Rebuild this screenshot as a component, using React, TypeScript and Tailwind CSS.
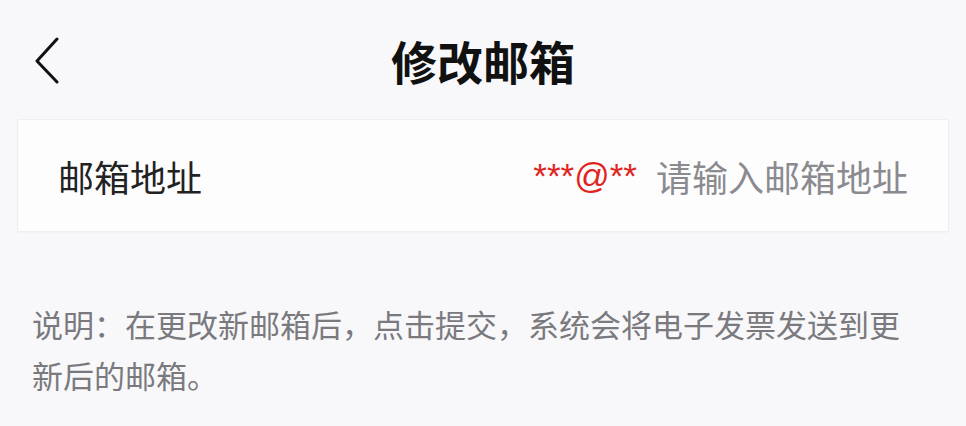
const cjk = "font-['Noto_Sans_CJK_SC','Noto_Sans',sans-serif]";

export default function App() {
  return (
    <div className={`w-[966px] h-[426px] overflow-hidden bg-[#f8f8fa] ${cjk}`}>
      <header className="relative h-[119px] flex items-center justify-center">
        <button className="absolute left-[33px] top-[35px] w-[28px] h-[50px] flex items-center justify-center">
          <svg width="26" height="48" viewBox="0 0 26 48" fill="none">
            <path d="M23 3 L3 25 L23 46" stroke="#111" strokeWidth="3" strokeLinecap="round" strokeLinejoin="round" />
          </svg>
        </button>
        <h1 className="text-[46px] font-bold text-[#111] leading-none">修改邮箱</h1>
      </header>

      <div className="mx-[17px] h-[113px] bg-[#fdfdfe] border border-[#efeff2] rounded-[2px] shadow-[0_1px_2px_rgba(0,0,0,0.03)] flex items-center justify-between pl-[40px] pr-[40px]">
        <span className="text-[36px] text-[#222] leading-none">邮箱地址</span>
        <div className="flex items-center gap-[19px]">
          <span className="font-['Liberation_Sans',Arial,sans-serif] text-[35px] text-[#e0251e] leading-none">***@**</span>
          <span className="text-[36px] text-[#8a8a8f] leading-none">请输入邮箱地址</span>
        </div>
      </div>

      <p className="ml-[32px] mt-[66px] w-[880px] text-[31px] leading-[51px] text-[#7a7a7e]">
        说明：在更改新邮箱后，点击提交，系统会将电子发票发送到更新后的邮箱。
      </p>
    </div>
  );
}
